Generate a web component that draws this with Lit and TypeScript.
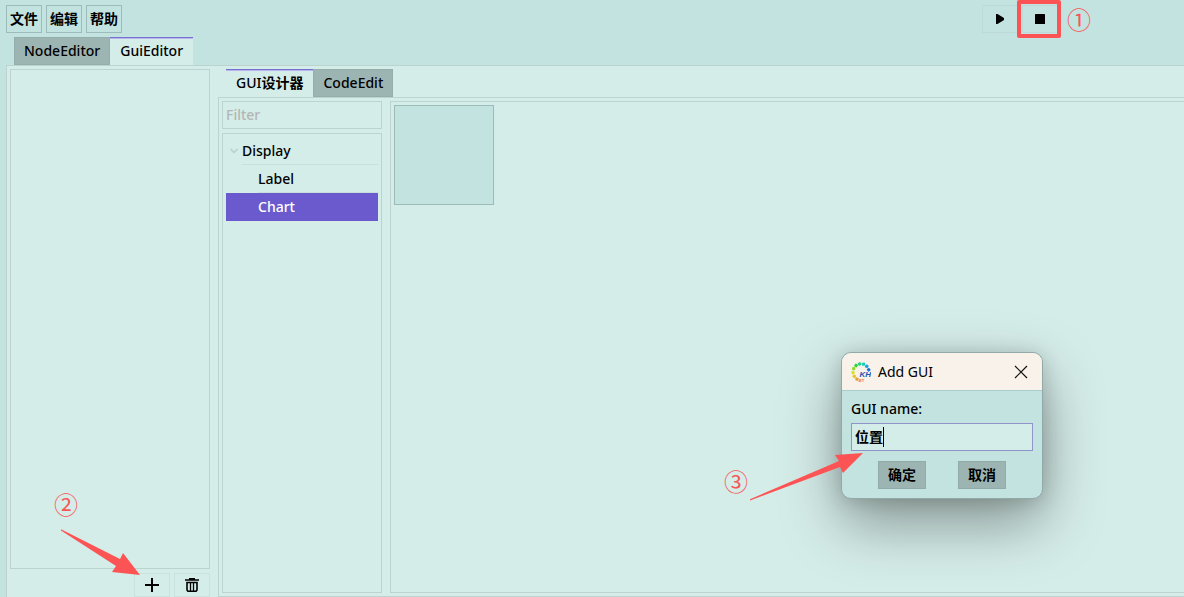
import { LitElement, html, css, svg } from "lit";
import { customElement, property, state } from "lit/decorators.js";

const shared = css`
  * {
    box-sizing: border-box;
  }
  button,
  input {
    font: inherit;
    color: inherit;
    margin: 0;
    padding: 0;
    border-radius: 0;
    outline: none;
  }
  .cjk {
    font-weight: 700;
  }
`;

@customElement("tab-strip")
class TabStrip extends LitElement {
  static styles = [
    shared,
    css`
      :host {
        display: block;
      }
      .tabs {
        display: flex;
        padding-left: 8px;
        margin-bottom: -1px;
      }
      .tab {
        height: 28px;
        padding: 0 10px;
        background: #9db5b2;
        border: 0;
        box-shadow: inset 0 0 0 1px #96aeab;
        white-space: nowrap;
        margin-bottom: 1px;
      }
      .tab.active {
        height: 29px;
        margin-bottom: 0;
        padding-bottom: 2px;
        background: #d5ede9;
        box-shadow: inset 0 1px #7570d2, inset 0 2px #b9b4ec;
      }
    `,
  ];

  @property({ attribute: false }) tabs: unknown[] = [];
  @property({ type: Number }) active = 0;

  render() {
    return html`<div class="tabs" role="tablist">
      ${this.tabs.map(
        (tab, i) => html`<button
          class="tab ${i === this.active ? "active" : ""}"
          role="tab"
          aria-selected=${i === this.active}
          @click=${() => (this.active = i)}
        >${tab}</button>`
      )}
    </div>`;
  }
}

const ringColours = [
  "#1b74d8", "#16a5e0", "#19cfc0", "#22d486", "#2fd23c",
  "#8edb2c", "#dfe022", "#e3c62c", "#e2a034",
];

@customElement("name-dialog")
class NameDialog extends LitElement {
  static styles = [
    shared,
    css`
      :host {
        display: block;
        width: 202px;
        border: 1px solid #93a9a7;
        border-radius: 10px;
        overflow: hidden;
        background: #c3e3e0;
      }
      .title {
        display: flex;
        align-items: center;
        height: 38px;
        padding: 0 9px;
        gap: 7px;
        background: #f8f2ea;
        border-bottom: 1px solid #a9cdca;
        font-weight: 400;
      }
      .caption {
        flex: 1;
      }
      .close {
        width: 24px;
        height: 24px;
        display: grid;
        place-items: center;
        border: 0;
        background: none;
      }
      .body {
        display: grid;
        padding: 4px 9px 9px;
      }
      label {
        line-height: 28px;
      }
      .field {
        position: relative;
      }
      .name {
        display: block;
        width: 100%;
        height: 28px;
        padding: 0 3px 2px;
        border: 1px solid #8f95cb;
        background: #d5ede9;
        font-weight: 700;
      }
      .caret {
        position: absolute;
        left: 32px;
        top: 4px;
        width: 1px;
        height: 20px;
        background: #000;
      }
      .actions {
        display: flex;
        justify-content: center;
        gap: 32px;
        margin-top: 10px;
      }
      .action {
        width: 48px;
        height: 28px;
        background: #9db5b2;
        border: 1px solid #93aba8;
        font-weight: 700;
      }
    `,
  ];

  render() {
    return html`
      <div class="title">
        <svg width="20" height="20" viewBox="0 0 20 20" aria-hidden="true">
          ${ringColours.map((fill, i) => {
            const a = ((-16 - i * 28) * Math.PI) / 180;
            return svg`<rect x="-1.6" y="-1.6" width="3.2" height="3.2" rx="0.8" fill=${fill}
              transform="translate(${10 + 8 * Math.cos(a)} ${10 + 8.2 * Math.sin(a)}) rotate(${(a * 180) / Math.PI + 70})" />`;
          })}
          <text x="8.500" y="15" font-family="Liberation Sans" font-size="8" font-weight="700" font-style="italic" fill="#2457b8">KH</text>
          <text x="7" y="20" font-family="Liberation Sans" font-size="4" font-weight="700" fill="#ee6a4c">.ET</text>
        </svg>
        <span class="caption">Add GUI</span>
        <button class="close" aria-label="Close">
          <svg width="14" height="14" viewBox="0 0 14 14" fill="none" stroke="#111" stroke-width="1.2">
            <path d="M1 1 13 13M13 1 1 13" />
          </svg>
        </button>
      </div>
      <div class="body">
        <label for="name">GUI name:</label>
        <div class="field">
          <input class="name" id="name" type="text" value="位置" />
          <span class="caret"></span>
        </div>
        <div class="actions">
          <button class="action">确定</button>
          <button class="action">取消</button>
        </div>
      </div>
    `;
  }
}

@customElement("app-root")
class AppRoot extends LitElement {
  static styles = [
    shared,
    css`
      :host {
        position: relative;
        display: flex;
        flex-direction: column;
        height: 100vh;
        min-height: 400px;
        overflow: hidden;
        background: #c2e3e0;
        color: #000;
        font: 500 14px/20px "Noto Sans", "Noto Sans CJK SC", sans-serif;
      }
      .menubar {
        display: flex;
        gap: 4px;
        padding: 5px 126px 4px 6px;
      }
      .menu {
        width: 36px;
        height: 28px;
        border: 1px solid #9dbbb8;
        background: none;
        font-weight: 700;
      }
      .tool {
        position: relative;
        width: 36px;
        height: 28px;
        display: grid;
        place-items: center;
        border: 1px solid #bddad7;
        background: none;
      }
      .tool.pale {
        height: 24px;
        border-color: #cbe1de;
      }
      .tool.first {
        margin-left: auto;
      }
      .mark {
        position: absolute;
        inset: -6px -4px -6px -6px;
        border: 4px solid #fc5454;
        border-radius: 2px;
      }
      .workspace {
        flex: 1;
        min-height: 0;
        display: flex;
        flex-direction: column;
        padding-left: 6px;
      }
      .page {
        flex: 1;
        min-height: 0;
        display: flex;
        gap: 8px;
        padding: 3px 0 0 3px;
        background: #d5ede9;
        border: solid #bdd3d0;
        border-width: 1px 0 0 1px;
      }
      .sidebar {
        width: 200px;
        display: flex;
        flex-direction: column;
        gap: 4px;
      }
      .list {
        flex: 1;
        border: 1px solid #bdd3d0;
      }
      .list-tools {
        display: flex;
        justify-content: flex-end;
        gap: 4px;
      }
      .designer {
        flex: 1;
        min-width: 0;
        display: flex;
        flex-direction: column;
      }
      .panes {
        flex: 1;
        min-height: 0;
        display: flex;
        gap: 8px;
        padding: 3px 0 3px 3px;
        border: solid #bdd3d0;
        border-width: 1px 0 1px 1px;
      }
      .palette {
        width: 160px;
        display: flex;
        flex-direction: column;
        gap: 4px;
      }
      .filter {
        width: 100%;
        height: 28px;
        padding: 0 3px 2px;
        border: 1px solid #bdd3d0;
        background: none;
      }
      .filter::placeholder {
        color: #b3b5b4;
        opacity: 1;
      }
      .tree {
        flex: 1;
        margin: 0;
        padding: 3px;
        border: 1px solid #bdd3d0;
        list-style: none;
      }
      .tree ul {
        margin: 0;
        padding: 0;
        list-style: none;
      }
      .row {
        display: flex;
        align-items: center;
        height: 28px;
        padding-left: 4px;
      }
      .row svg {
        margin-right: 4px;
      }
      .row span {
        flex: 1;
        line-height: 27px;
        border-bottom: 1px solid #c9dfdc;
      }
      .leaf {
        padding-left: 32px;
      }
      .leaf.selected {
        background: #6a5acd;
        color: #fff;
      }
      .leaf.selected span {
        border-color: #6a5acd;
      }
      .canvas {
        flex: 1;
        padding: 3px;
        border: solid #bdd3d0;
        border-width: 1px 0 1px 1px;
      }
      .widget {
        width: 100px;
        height: 100px;
        background: #c3e3e0;
        border: 1px solid #9dbbb8;
      }
      name-dialog {
        position: absolute;
        left: 841px;
        top: 352px;
        box-shadow: 0 24px 60px rgba(0, 0, 0, 0.38), 0 2px 20px rgba(0, 0, 0, 0.16);
      }
      .note {
        position: absolute;
        color: #f85555;
        font: 400 24px/24px "Noto Sans CJK SC", sans-serif;
      }
      .one {
        left: 1067px;
        top: 7px;
      }
      .two {
        left: 54px;
        top: 492px;
      }
      .three {
        left: 724px;
        top: 469px;
      }
      .arrow {
        position: absolute;
        fill: #fc5454;
      }
      .arrow-two {
        left: 60px;
        top: 528px;
      }
      .arrow-three {
        left: 748px;
        top: 450px;
      }
    `,
  ];

  @state() selected = "Chart";

  render() {
    return html`
      <nav class="menubar">
        <button class="menu">文件</button>
        <button class="menu">编辑</button>
        <button class="menu">帮助</button>
        <button class="tool first" aria-label="Run">
          <svg width="10" height="12" viewBox="0 0 10 12"><path d="M1 1h1.500L9 5v2L2.500 11H1z" /></svg>
        </button>
        <button class="tool" aria-label="Stop">
          <svg width="10" height="10" viewBox="0 0 10 10"><rect width="10" height="10" rx="0.5" /></svg>
          <span class="mark"></span>
        </button>
      </nav>
      <main class="workspace">
        <tab-strip .tabs=${["NodeEditor", "GuiEditor"]} active="1"></tab-strip>
        <div class="page">
          <aside class="sidebar">
            <div class="list"></div>
            <div class="list-tools">
              <button class="tool pale" aria-label="Add">
                <svg width="14" height="14" viewBox="0 0 14 14"><path d="M6 0h2v6h6v2H8v6H6V8H0V6h6z" /></svg>
              </button>
              <button class="tool pale" aria-label="Delete">
                <svg width="14" height="14" viewBox="0 0 14 14" fill="none" stroke="#000">
                  <path d="M4 .5h6M0 2h14" stroke-width="1.500" />
                  <path d="M2 4.500h10V12l-1 1.300H3L2 12z" stroke-width="1.600" />
                  <path d="M5.500 4v9M8.500 4v9" stroke-width="1.300" />
                </svg>
              </button>
            </div>
          </aside>
          <section class="designer">
            <tab-strip
              .tabs=${[html`GUI<span class="cjk">设计器</span>`, "CodeEdit"]}
              active="0"
            ></tab-strip>
            <div class="panes">
              <div class="palette">
                <input class="filter" type="text" placeholder="Filter" aria-label="Filter" />
                <ul class="tree" role="tree">
                  <li role="treeitem" aria-expanded="true">
                    <div class="row">
                      <svg width="8" height="6" viewBox="0 0 8 6" fill="none" stroke="#bdd3d0" stroke-width="1.800">
                        <path d="M.5 1 4 4.500 7.500 1" />
                      </svg>
                      <span>Display</span>
                    </div>
                    <ul role="group">
                      ${["Label", "Chart"].map(
                        (name) => html`<li
                          role="treeitem"
                          class="row leaf ${name === this.selected ? "selected" : ""}"
                          aria-selected=${name === this.selected}
                          @click=${() => (this.selected = name)}
                        ><span>${name}</span></li>`
                      )}
                    </ul>
                  </li>
                </ul>
              </div>
              <div class="canvas"><div class="widget"></div></div>
            </div>
          </section>
        </div>
      </main>
      <name-dialog role="dialog" aria-label="Add GUI"></name-dialog>
      <span class="note one">①</span>
      <span class="note two">②</span>
      <span class="note three">③</span>
      <svg class="arrow arrow-two" width="82" height="50" viewBox="0 0 82 50">
        <path d="M1 1.300 1 2.500 56 38 52 44 80 47 63 25 60 31z" />
      </svg>
      <svg class="arrow arrow-three" width="116" height="52" viewBox="0 0 116 52">
        <path d="M2 49.200 91 11 87 5 115 3 95 23 92 17 2 50.500z" />
      </svg>
    `;
  }
}
